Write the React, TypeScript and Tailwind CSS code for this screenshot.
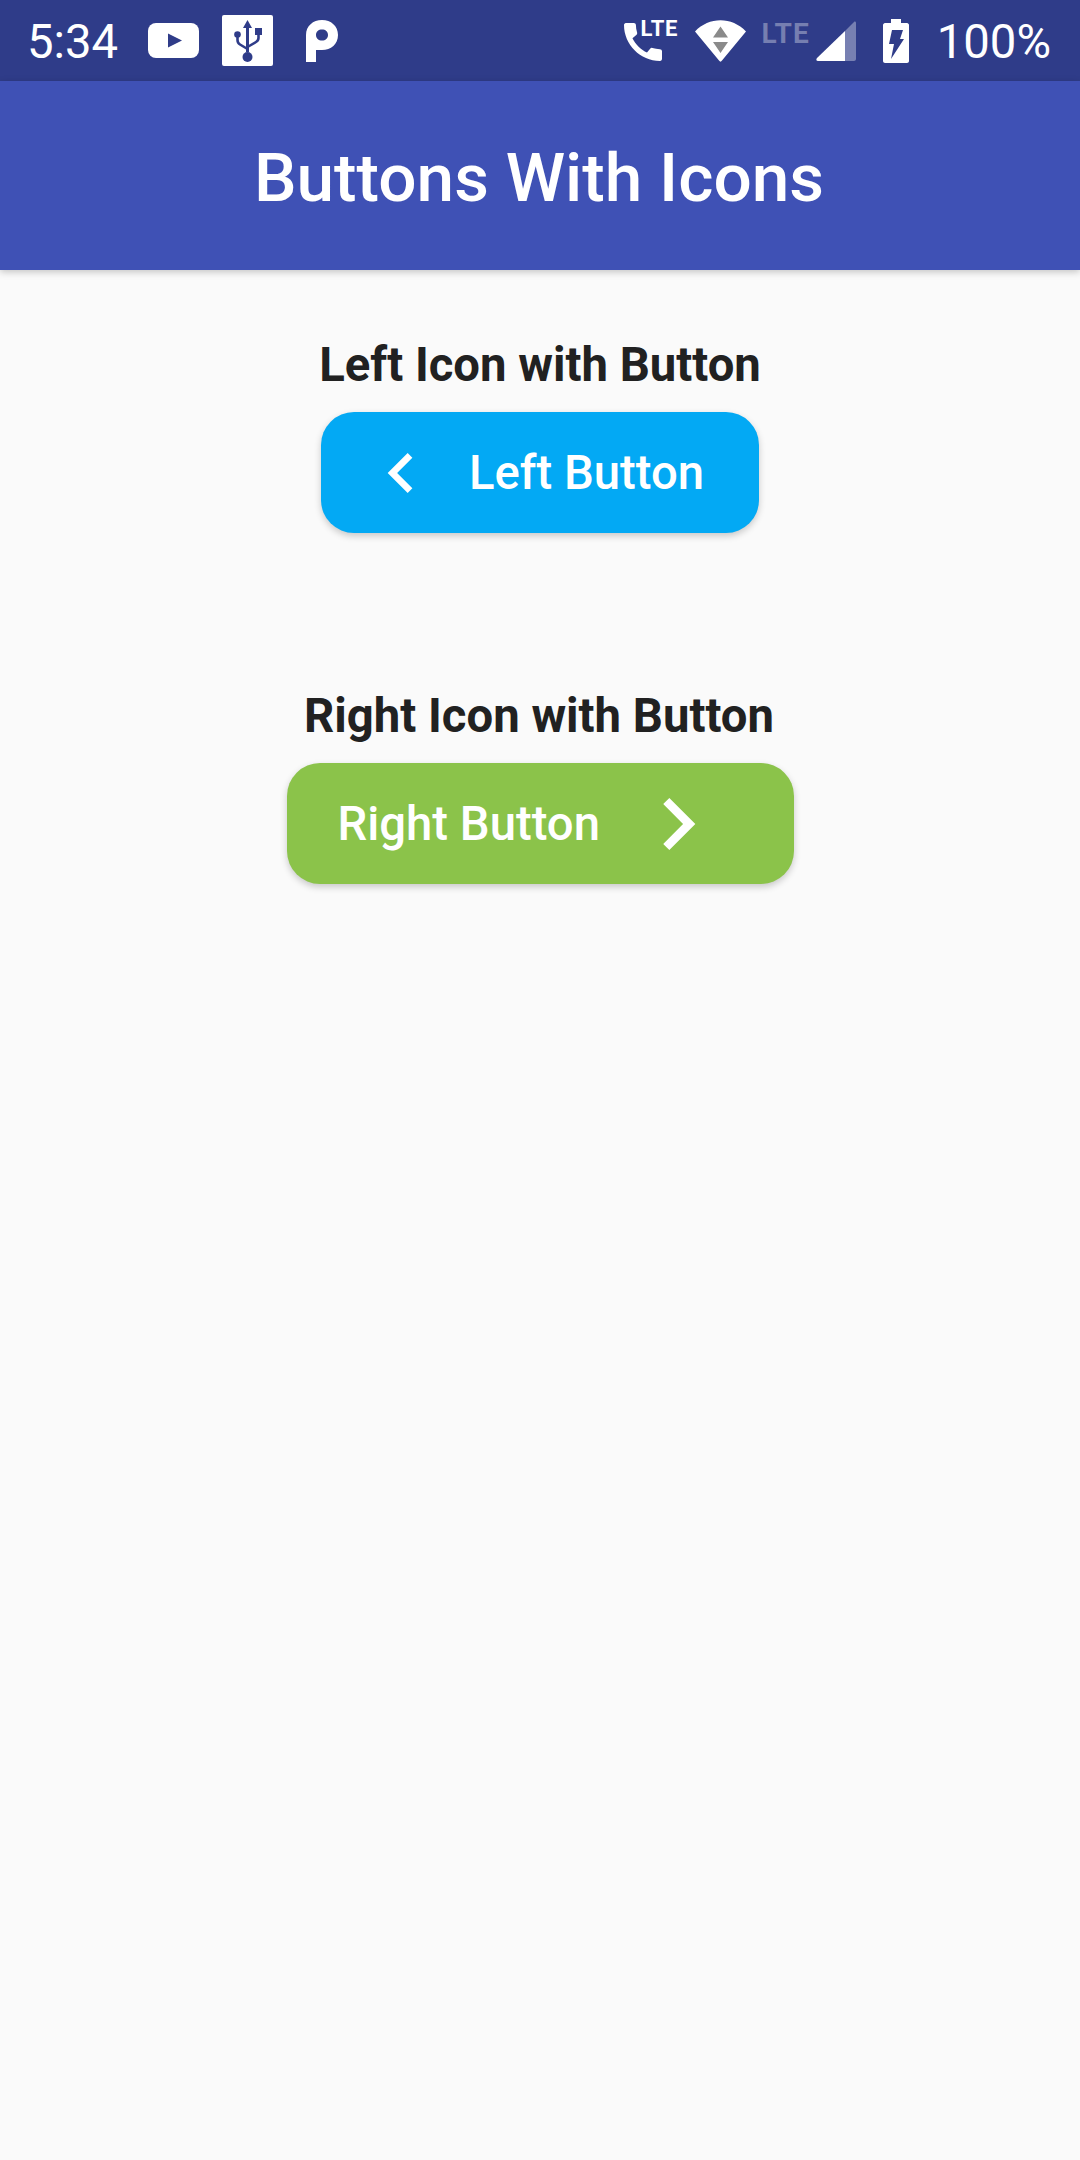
const BAR = "#2f3c89";

function YouTube() {
  return (
    <svg width="51" height="35" viewBox="0 0 51 35" className="ml-[30px]">
      <rect x="0" y="0" width="51" height="35" rx="8" fill="#fff" />
      <path d="M20 10.5 L34 17.5 L20 24.5Z" fill={BAR} />
    </svg>
  );
}

function Usb() {
  return (
    <svg width="51" height="51" viewBox="0 0 51 51" className="ml-[23px]">
      <rect width="51" height="51" rx="2" fill="#fff" />
      <g fill={BAR}>
        <path d="M25.5 5 L30 13 L27 13 L27 37 L24 37 L24 13 L21 13Z" />
        <circle cx="25.5" cy="42" r="5" />
        <circle cx="15.5" cy="19.5" r="3.3" />
        <rect x="33" y="13" width="7" height="7" />
      </g>
      <path d="M15.5 20 V25 Q15.5 28 18 29.5 L25.5 34 M36.5 19 V23 Q36.5 25.5 34 27 L25.5 32" fill="none" stroke={BAR} strokeWidth="2.6" />
    </svg>
  );
}

function PIcon() {
  return (
    <svg width="32" height="42" viewBox="0 0 32 42" className="ml-[33px]">
      <path fillRule="evenodd" fill="#fff" d="M0 42 V15 C0 6 7 0 16 0 C25 0 32 6 32 15 C32 24 25 30 16 30 H10 V42Z M10 15 C10 18.5 12.5 20.5 16 20.5 C19.5 20.5 22 18.5 22 15 C22 11.5 19.5 9.5 16 9.5 C12.5 9.5 10 11.5 10 15Z" />
    </svg>
  );
}

function PhoneLte() {
  return (
    <div className="relative h-[42px] w-[55px]">
      <svg width="38" height="38" viewBox="3 3 18 18" className="absolute left-0 top-[3px]">
        <path fill="#fff" d="M20.01 15.38c-1.23 0-2.42-.2-3.53-.56a.977.977 0 0 0-1.01.24l-1.57 1.97c-2.83-1.35-5.48-3.9-6.89-6.83l1.95-1.66c.27-.28.35-.67.24-1.02-.37-1.11-.56-2.3-.56-3.53 0-.54-.45-.99-.99-.99H4.19C3.65 3 3 3.24 3 3.99 3 13.28 10.73 21 20.01 21c.71 0 .99-.63.99-1.18v-3.45c0-.54-.45-.99-.99-.99z" />
      </svg>
      <span className="absolute left-[17px] top-[-3px] font-['Roboto',sans-serif] text-[22px] font-bold leading-[24px] tracking-[0.7px] text-white">LTE</span>
    </div>
  );
}

function Wifi() {
  return (
    <svg width="51" height="42" viewBox="0 0 51 42" className="ml-[16px]">
      <path fill="#fff" d="M0 11.5 C14 -3.5 37 -3.5 51 11.5 L27 40.5 C26 42 25 42 24 40.5Z" />
      <path fill="#8a8a8a" d="M25.5 6.5 L33 17.5 H18Z M18 22 H33 L25.5 33Z" />
    </svg>
  );
}

function Signal() {
  return (
    <svg width="40" height="40" viewBox="0 0 40 40" className="ml-[6px]">
      <path fill="#fff" fillOpacity="0.35" d="M29 10 L38 1 C39 0 40 1 40 2 V38 C40 39 39 40 38 40 H29Z" />
      <path fill="#fff" d="M29 10 V40 H2 C0 40 0 38 1 37Z" />
    </svg>
  );
}

function Battery() {
  return (
    <svg width="26" height="44" viewBox="0 0 26 44" className="ml-[27px]">
      <path fill="#fff" d="M8 0 H18 V4 H24 C25 4 26 5 26 6 V42 C26 43 25 44 24 44 H2 C1 44 0 43 0 42 V6 C0 5 1 4 2 4 H8Z" />
      <path fill={BAR} d="M9 11 H20 L17 20 H21 L8 40 L11 25 H6Z" />
    </svg>
  );
}

function ChevronLeft() {
  return (
    <svg width="80" height="80" viewBox="0 0 24 24" fill="#fff" className="shrink-0">
      <path d="M15.41 7.41L14 6l-6 6 6 6 1.41-1.41L10.83 12z" />
    </svg>
  );
}

function ChevronRight() {
  return (
    <svg width="104" height="104" viewBox="0 0 24 24" fill="#fff" className="shrink-0">
      <path d="M10 6L8.59 7.41 13.17 12l-4.58 4.59L10 18l6-6z" />
    </svg>
  );
}

export default function App() {
  return (
    <div className="flex h-[2160px] w-[1080px] flex-col overflow-hidden bg-[#fafafa] font-['Roboto',sans-serif]">
      <div className="flex h-[81px] shrink-0 items-center justify-between bg-[#2f3c89] text-white">
        <div className="flex items-center">
          <span className="ml-[27px] pt-[4px] text-[47.25px] leading-[55px]">5:34</span>
          <YouTube />
          <Usb />
          <PIcon />
        </div>
        <div className="flex items-center">
          <PhoneLte />
          <Wifi />
          <span className="relative top-[-7px] ml-[16px] text-[28px] font-bold leading-[32px] tracking-[1px] text-white/35">LTE</span>
          <Signal />
          <Battery />
          <span className="ml-[28px] mr-[29px] pt-[4px] text-[47.25px] leading-[55px]">100%</span>
        </div>
      </div>
      <div className="relative z-10 flex h-[189px] shrink-0 items-center justify-center bg-[#3f51b5] pt-[3px] pr-[2px] shadow-[0_2px_7px_rgba(0,0,0,0.22)]">
        <h1 className="text-[67.5px] font-medium leading-[79px] text-white">Buttons With Icons</h1>
      </div>
      <div className="flex flex-col items-center pt-[67px]">
        <h2 className="text-[47.25px] font-bold leading-[56px] text-[#212121]">Left Icon with Button</h2>
        <button className="mt-[19px] flex h-[121px] w-[438px] items-center rounded-[33px] bg-[#03a9f4] pl-[40px] shadow-[0_3px_7px_rgba(0,0,0,0.2)]">
          <ChevronLeft />
          <span className="ml-[28px] pt-[1px] text-[47.25px] font-medium leading-[55px] text-white">Left Button</span>
        </button>
        <h2 className="mt-[155px] pr-[2px] text-[47.25px] font-bold leading-[56px] text-[#212121]">Right Icon with Button</h2>
        <button className="mt-[19px] flex h-[121px] w-[507px] items-center rounded-[33px] bg-[#8bc34a] pl-[51px] shadow-[0_3px_7px_rgba(0,0,0,0.2)]">
          <span className="pt-[1px] text-[47.25px] font-medium leading-[55px] text-white">Right Button</span>
          <span className="ml-[26px]"><ChevronRight /></span>
        </button>
      </div>
    </div>
  );
}
